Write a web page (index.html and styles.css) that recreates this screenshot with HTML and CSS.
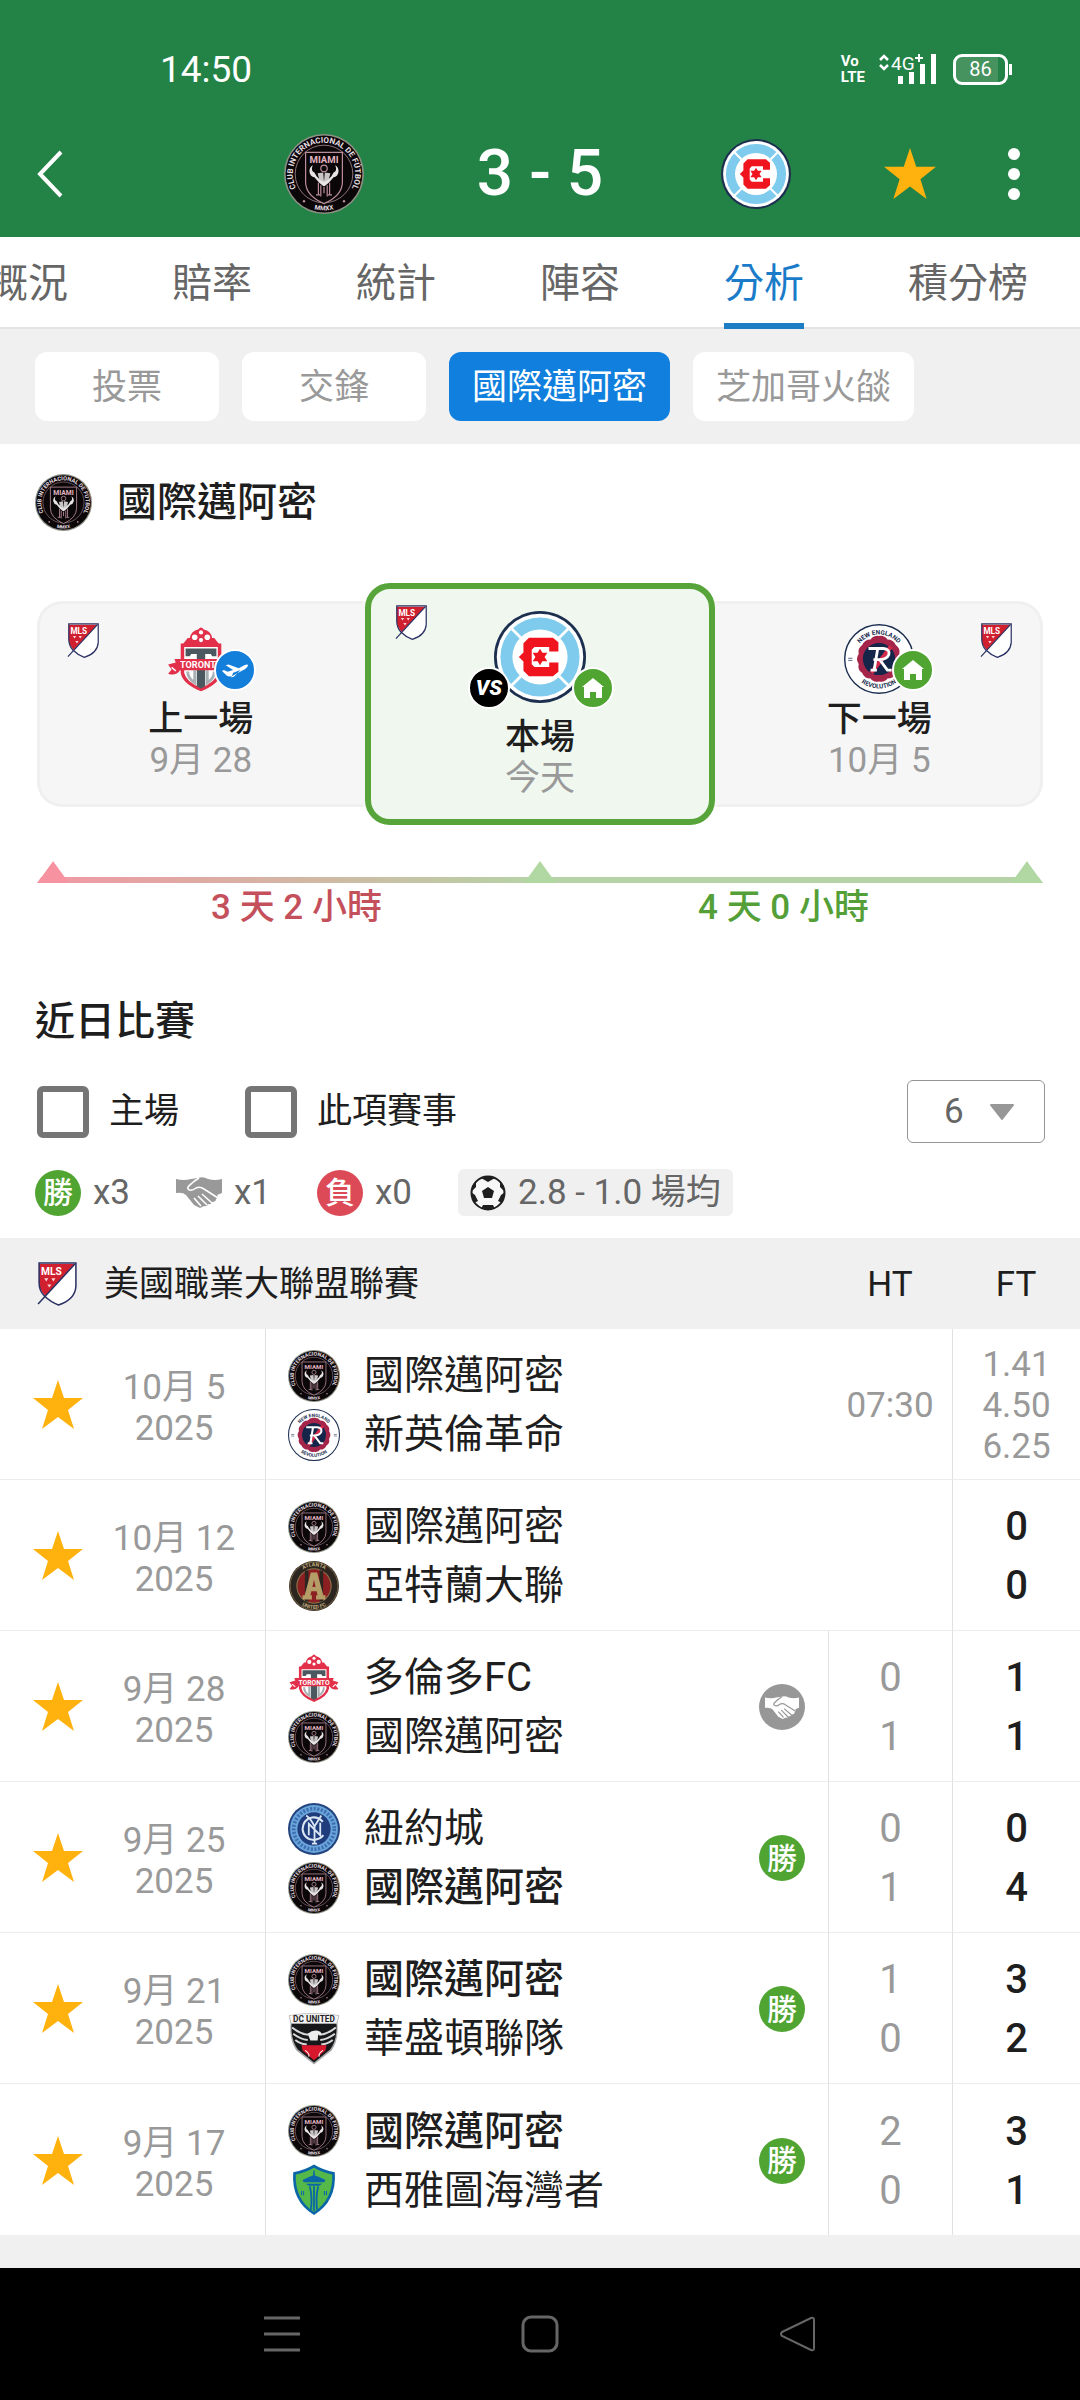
FILE: index.html
```html
<!DOCTYPE html>
<html lang="zh-Hant">
<head>
<meta charset="UTF-8">
<meta name="viewport" content="width=device-width">
<title>國際邁阿密 3 - 5 芝加哥火燄</title>
<link rel="stylesheet" href="styles.css">
</head>
<body>
	<!-- logos and icons -->
	<svg class="sprite" aria-hidden="true">
		<symbol id="miami" viewBox="0 0 100 100">
			<circle cx="50" cy="50" r="50" fill="#8d9084"/>
			<circle cx="50" cy="50" r="48" fill="#0b0709"/>
			<path id="miami_arc" d="M24 79 A39 39 0 1 1 76 79" fill="none"/>
			<path id="miami_bas" d="M30 91 A46 46 0 0 0 70 91" fill="none"/>
			<text class="logo_texte" font-size="10" fill="#e6dfe1"><textPath href="#miami_arc" startOffset="50%" text-anchor="middle">CLUB INTERNACIONAL DE FÚTBOL</textPath></text>
			<text class="logo_texte" font-size="8" fill="#e6dfe1"><textPath href="#miami_bas" startOffset="50%" text-anchor="middle">MMXX</textPath></text>
			<circle cx="50" cy="50" r="36" fill="none" stroke="#a88a92" stroke-width="1"/>
			<path d="M27 23 H73 V60 Q73 77 50 87 Q27 77 27 60 Z" fill="#0b0709" stroke="#b98d99" stroke-width="1.5"/>
			<text class="logo_texte" x="50" y="36" font-size="12" fill="#e2b3c0" text-anchor="middle">MIAMI</text>
			<circle cx="50" cy="43" r="4" fill="none" stroke="#b98d99" stroke-width="1.5"/>
			<path d="M36 39 Q33 46 38 48 L41 53 Q45 58 50 58 Q55 58 59 53 L62 48 Q67 46 64 39 Q69 42 68 48 Q67 53 62 54 L56 61 L51 65 H49 L44 61 L38 54 Q33 53 32 48 Q31 42 36 39 Z" fill="#e8e4e5"/>
			<path d="M42 49 L49 48 L50 60 L44 57 Z M58 49 L51 48 L50 60 L56 57 Z" fill="#c9c5c6"/>
			<path d="M43 61 V76 M46 64 V78 M57 61 V76 M54 64 V78 M40 76 H45 M55 76 H60 M50 66 V74" fill="none" stroke="#b98d99" stroke-width="1.5"/>
			<circle cx="25" cy="84" r="1.5" fill="#b98d99"/>
			<circle cx="75" cy="84" r="1.5" fill="#b98d99"/>
		</symbol>
		<symbol id="chicago" viewBox="0 0 100 100">
			<circle cx="50" cy="50" r="50" fill="#1c2f4f"/>
			<circle cx="50" cy="50" r="47" fill="#fff"/>
			<circle cx="50" cy="50" r="43" fill="#7ecbee"/>
			<path d="M18 18 L82 82 M82 18 L18 82" stroke="#fff" stroke-width="3"/>
			<circle cx="50" cy="50" r="30" fill="#fff"/>
			<path d="M70 44 V34 L64 29 H38 L32 35 V45 L27 50 L32 55 V65 L38 71 H64 L70 66 V56 H60 V61 H44 L41 58 V42 L44 39 H60 V44 Z" fill="#f0141e"/>
			<path d="M50 41 L52.600 45.500 H58 L55 50 L58 54.500 H52.600 L50 59 L47.400 54.500 H42 L45 50 L42 45.500 H47.400 Z" fill="#f0141e"/>
		</symbol>
		<symbol id="mls" viewBox="0 0 40 44">
			<path d="M2 2 H38 V24 Q37 37 22 42 Q14 40 8 33 Q2 28 2 20 Z" fill="#fff"/>
			<path d="M2 2 H37 L8 33 Q2 27 2 20 Z" fill="#d0202f"/>
			<path d="M2 1 H38 V24 Q37 37 21 42 Q13 39 7 33 Q2 28 2 20 Z" fill="none" stroke="#2b3263" stroke-width="1.5"/>
			<path d="M37 2 L1 41" stroke="#2b3263" stroke-width="1.5"/>
			<text class="logo_texte" x="4" y="13" font-size="10" fill="#fff">MLS</text>
			<path d="M7 16 l2 3 2-3 Z M14 16 l2 3 2-3 Z M10 22 l2 3 2-3 Z" fill="#fbd5d8"/>
		</symbol>
		<symbol id="toronto" viewBox="0 0 100 100">
			<path d="M24 29 L31 20 H34 Q36 10 46 8 Q50 2 54 8 Q64 10 66 20 H69 L76 29 Z" fill="#e3304a"/>
			<g fill="#fff"><circle cx="50" cy="12" r="3"/><circle cx="41" cy="19" r="4"/><circle cx="59" cy="19" r="4"/><circle cx="50" cy="23" r="3"/></g>
			<path d="M21 28 H79 V70 Q76 86 50 96 Q24 86 21 70 Z" fill="#e3304a"/>
			<path d="M26 33 H74 V70 Q71 83 50 91 Q29 83 26 70 Z" fill="#fff"/>
			<path d="M28 35 H72 V46 H66 L64 43 H56 V89 L50 92 L44 89 V43 H36 L34 46 H28 Z" fill="#4c5860"/>
			<path d="M31 68 Q31 78 41 84 V66 M69 68 Q69 78 59 84 V66" fill="none" stroke="#a9b0b4" stroke-width="4"/>
			<path d="M12 50 H88 L86 55 L97 58 L92 65 L97 71 Q86 75 80 66 H20 Q14 75 3 71 L8 65 L3 58 L14 55 Z" fill="#e3304a"/>
			<path d="M8 62 L14 67 M92 62 L86 67" stroke="#fff" stroke-width="2"/>
			<text class="logo_texte" x="50" y="63" font-size="13" fill="#fff" text-anchor="middle">TORONTO</text>
		</symbol>
		<symbol id="revolution" viewBox="0 0 100 100">
			<circle cx="50" cy="50" r="49" fill="#fff" stroke="#1b2d4f" stroke-width="2"/>
			<path id="rev_arc" d="M15 50 A35 35 0 0 1 85 50" fill="none"/>
			<path id="rev_bas" d="M8 50 A42 42 0 0 0 92 50" fill="none"/>
			<text class="logo_texte" font-size="9" fill="#1b2d4f"><textPath href="#rev_arc" startOffset="50%" text-anchor="middle">NEW ENGLAND</textPath></text>
			<text class="logo_texte" font-size="9" fill="#1b2d4f"><textPath href="#rev_bas" startOffset="50%" text-anchor="middle">REVOLUTION</textPath></text>
			<path d="M6 49 H12 M6 52 H12 M88 49 H94 M88 52 H94" stroke="#1b2d4f" stroke-width="1"/>
			<path d="M50 17 Q58 16 62 22 Q71 22 74 30 Q81 35 79 43 Q84 50 79 57 Q81 66 74 70 Q71 78 62 78 Q58 84 50 82 Q42 84 38 78 Q29 78 26 70 Q19 66 21 57 Q16 50 21 43 Q19 35 26 30 Q29 22 38 22 Q42 16 50 17 Z" fill="#a5244a"/>
			<circle cx="50" cy="50" r="23" fill="#15254a"/>
			<path d="M39 70 L67 32" stroke="#d22a4b" stroke-width="6"/>
			<path d="M35 35 H56 Q66 36 64 44 Q61 51 50 51 H42 M48 36 L43 66 M38 66 H47 M51 51 L62 66 H68" fill="none" stroke="#fff" stroke-width="4"/>
		</symbol>
		<symbol id="atlanta" viewBox="0 0 100 100">
			<circle cx="50" cy="50" r="48" fill="#2c2520"/>
			<circle cx="50" cy="50" r="46" fill="none" stroke="#8b774c" stroke-width="1.5"/>
			<circle cx="50" cy="50" r="34" fill="#8b774c"/>
			<circle cx="50" cy="50" r="32" fill="#8c1f22"/>
			<path d="M36 20 V80 M64 20 V80" stroke="#2c2520" stroke-width="7"/>
			<path d="M44 24 H56 L68 68 H72 V76 H54 V68 H57 L55 60 H45 L43 68 H46 V76 H28 V68 H32 Z M50 38 L47 52 H53 Z" fill="#b59d68" fill-rule="evenodd"/>
			<path id="atl_arc" d="M12 50 A38 38 0 0 1 88 50" fill="none"/>
			<path id="atl_bas" d="M6 50 A44 44 0 0 0 94 50" fill="none"/>
			<text class="logo_texte" font-size="10" fill="#c0ab7c"><textPath href="#atl_arc" startOffset="50%" text-anchor="middle">ATLANTA</textPath></text>
			<text class="logo_texte" font-size="10" fill="#c0ab7c"><textPath href="#atl_bas" startOffset="50%" text-anchor="middle">UNITED FC</textPath></text>
		</symbol>
		<symbol id="newyork" viewBox="0 0 100 100">
			<circle cx="50" cy="50" r="50" fill="#24457f"/>
			<circle cx="50" cy="50" r="46" fill="#6aa5dc"/>
			<circle cx="50" cy="50" r="39" fill="none" stroke="#3e6fb0" stroke-width="7" stroke-dasharray="4 3"/>
			<circle cx="50" cy="50" r="32" fill="#1f3c7c"/>
			<path d="M67 36 Q58 26 46 28 Q29 32 28 50 Q30 70 50 71 Q62 70 68 62" fill="none" stroke="#dbe6f3" stroke-width="4"/>
			<path d="M40 62 V40 L62 62 V38 M35 24 Q44 30 51 45 L64 24 M51 45 V78 M46 78 H56" fill="none" stroke="#dbe6f3" stroke-width="3.5"/>
		</symbol>
		<symbol id="washington" viewBox="0 0 100 100">
			<path d="M2 5 Q26 0 50 1 Q74 0 98 5 L95 20 Q98 52 84 72 L50 99 L16 72 Q2 52 5 20 Z" fill="#a9a9a9"/>
			<path d="M7 20 H93 Q95 52 81 70 L50 95 L19 70 Q5 52 7 20 Z" fill="#17181a"/>
			<path d="M2 5 Q26 0 50 1 Q74 0 98 5 L94 20 H6 Z" fill="#f4f4f4" stroke="#a9a9a9" stroke-width="1"/>
			<text class="logo_texte" x="50" y="17" font-size="16" fill="#222" text-anchor="middle">DC UNITED</text>
			<path d="M8 28 Q22 40 40 42 M10 40 Q24 51 38 52 M14 52 Q26 61 36 60 M92 28 Q78 40 60 42 M90 40 Q76 51 62 52 M86 52 Q74 61 64 60" fill="none" stroke="#d8d8d8" stroke-width="4"/>
			<path d="M38 40 Q50 30 62 36 L66 42 L58 42 L57 53 H43 Z" fill="#ededed"/>
			<path d="M26 62 H74 L72 72 L50 91 L28 72 Z" fill="#d8182c"/>
			<path d="M33 72 Q42 78 40 84 M67 72 Q58 78 60 84" stroke="#fff" stroke-width="2" fill="none"/>
		</symbol>
		<symbol id="seattle" viewBox="0 0 100 100">
			<path d="M50 1 Q68 12 90 16 Q94 72 50 98 Q6 72 10 16 Q32 12 50 1 Z" fill="#0b66a8"/>
			<path d="M50 7 Q68 17 85 20 Q87 68 50 92 Q13 68 15 20 Q32 17 50 7 Z" fill="#55b949"/>
			<path d="M49 12 H51 L52 22 L60 25 L72 31 L70 35 H30 L28 31 L40 25 L48 22 Z M34 38 H66 L60 42 H40 Z" fill="#0b66a8"/>
			<path d="M42 43 Q47 64 44 88 M58 43 Q53 64 56 88 M50 43 V90" fill="none" stroke="#0b66a8" stroke-width="3.500"/>
			<path d="M26 52 V60 M30 52 V60 M70 52 V60 M74 52 V60" stroke="#0b66a8" stroke-width="2"/>
		</symbol>
		<symbol id="star" viewBox="0 0 50 50">
			<path d="M25 0 L31 18 H50 L35 30 L41 49 L25 37 L9 49 L15 30 L0 18 H19 Z" fill="#ffb10d"/>
		</symbol>
		<symbol id="home" viewBox="0 0 24 24">
			<path d="M12 2 L23 11 H21 V22 H15 V16 H9 V22 H3 V11 H1 Z" fill="#fff"/>
		</symbol>
		<symbol id="plane" viewBox="0 0 28 16">
			<path d="M0 9 L2 8 L6 10 L12 8 L4 3 L7 2 L18 6 L24 3 Q28 1 28 3 Q28 5 25 7 L12 14 Q8 16 5 14 Z M12 11 L10 16 L13 15 L20 8 Z" fill="#fff"/>
		</symbol>
		<symbol id="handshake" viewBox="0 0 46 31">
			<path d="M0 2 Q8 4 15 2 L22 1 Q27 -1 32 2 Q39 4 46 2 V16 L41 18 Q43 21 40 22 Q40 25 36 25 Q35 28 32 27 Q31 30 28 29 L24 31 L18 28 L10 18 Q7 15 0 16 Z" fill="currentColor"/>
			<path class="handshake_trait" d="M23 1 Q18 4 15 7 Q11 10 12 12 Q15 15 20 11 Q24 9 28 12 L42 21 M26 17 L36 26 M22 19 L31 28 M18 21 L25 29" fill="none" stroke-width="1.600"/>
		</symbol>
		<symbol id="ball" viewBox="0 0 36 36">
			<circle cx="18" cy="18" r="16.500" fill="#f7f7f7" stroke="#1e1e1e" stroke-width="2"/>
			<path d="M18 12 L24 16 L22 23 H14 L12 16 Z M11 3 L18 7 L25 3 L18 1 Z M1 17 L6 12 L6 6 L2 11 Z M35 17 L30 12 L30 6 L34 11 Z M1 17 L5 20 L8 26 L4 28 Z M35 17 L31 20 L28 26 L32 28 Z M13 30 H23 L25 34 H11 Z" fill="#1e1e1e"/>
		</symbol>
	</svg>

	<header>
		<div class="status">
			<time>14:50</time>
			<div class="status_icons">
				<div class="volte">Vo<br>LTE</div>
				<svg width="58" height="32" viewBox="0 0 58 32">
					<path d="M1 7 L5 3 L9 7 M1 12 L5 16 L9 12" fill="none" stroke="#fff" stroke-width="2.500"/>
					<text class="reseau" x="12" y="17" font-size="19">4G</text>
					<path d="M36 5 H44 M40 1 V9" stroke="#fff" stroke-width="2"/>
					<path d="M19 23 h5 v8 h-5 Z M30 19 h5 v12 h-5 Z M41 11 h5 v20 h-5 Z M52 1 h5 v30 h-5 Z" fill="#fff"/>
				</svg>
				<div class="battery">86</div>
			</div>
		</div>
		<div class="appbar">
			<button class="back" aria-label="返回"><svg width="28" height="48" viewBox="0 0 28 48"><path d="M25 2 L4 24 L25 46" fill="none" stroke="#fff" stroke-width="4"/></svg></button>
			<svg class="logo80"><use href="#miami"/></svg>
			<h1>3 - 5</h1>
			<svg class="logo70"><use href="#chicago"/></svg>
			<div class="actions">
				<button aria-label="收藏"><svg class="star_big"><use href="#star"/></svg></button>
				<button aria-label="更多"><svg width="14" height="54" viewBox="0 0 14 54"><g fill="#fff"><circle cx="7" cy="7" r="6"/><circle cx="7" cy="27" r="6"/><circle cx="7" cy="47" r="6"/></g></svg></button>
			</div>
		</div>
	</header>

	<nav class="tabs">
		<a href="#">概況</a>
		<a href="#">賠率</a>
		<a href="#">統計</a>
		<a href="#">陣容</a>
		<a href="#" class="active">分析</a>
		<a href="#">積分榜</a>
	</nav>

	<div class="chips">
		<button>投票</button>
		<button>交鋒</button>
		<button class="active">國際邁阿密</button>
		<button>芝加哥火燄</button>
	</div>

	<main>
		<h2 class="team_title"><svg><use href="#miami"/></svg>國際邁阿密</h2>

		<section class="cards">
			<div class="card prev">
				<svg class="ligue"><use href="#mls"/></svg>
				<div class="crest">
					<svg class="logo70"><use href="#toronto"/></svg>
					<span class="pin away"><svg width="26" height="16"><use href="#plane"/></svg></span>
				</div>
				<b>上一場</b>
				<span>9月 28</span>
			</div>
			<div class="card current">
				<svg class="ligue"><use href="#mls"/></svg>
				<div class="crest">
					<span class="pin versus">VS</span>
					<svg class="logo92"><use href="#chicago"/></svg>
					<span class="pin"><svg width="24" height="24"><use href="#home"/></svg></span>
				</div>
				<b>本場</b>
				<span>今天</span>
			</div>
			<div class="card next">
				<svg class="ligue"><use href="#mls"/></svg>
				<div class="crest">
					<svg class="logo70"><use href="#revolution"/></svg>
					<span class="pin"><svg width="24" height="24"><use href="#home"/></svg></span>
				</div>
				<b>下一場</b>
				<span>10月 5</span>
			</div>
		</section>

		<div class="timeline"><i class="red"></i><i></i><i></i></div>
		<div class="rest">
			<span class="red">3 天 2 小時</span>
			<span>4 天 0 小時</span>
		</div>

		<h2 class="recent">近日比賽</h2>

		<div class="filters">
			<label><input type="checkbox">主場</label>
			<label><input type="checkbox">此項賽事</label>
			<div class="count">
				<select aria-label="場數"><option>6</option></select>
				<svg width="26" height="17" viewBox="0 0 26 17"><path d="M2 1 H24 L13 15 Z" fill="#979797" stroke="#979797" stroke-width="2" stroke-linejoin="round"/></svg>
			</div>
		</div>

		<div class="stats">
			<div class="stat"><span class="rond">勝</span>x3</div>
			<div class="stat"><svg class="draw"><use href="#handshake"/></svg>x1</div>
			<div class="stat"><span class="rond lost">負</span>x0</div>
			<div class="average"><svg><use href="#ball"/></svg>2.8 - 1.0 場均</div>
		</div>

		<table>
			<colgroup><col class="c_date"><col><col class="c_ht"><col class="c_ft"></colgroup>
			<thead>
				<tr>
					<th colspan="2"><div class="league"><svg><use href="#mls"/></svg>美國職業大聯盟聯賽</div></th>
					<th>HT</th>
					<th>FT</th>
				</tr>
			</thead>
			<tbody>
				<tr>
					<td><div class="date"><button aria-label="收藏"><svg><use href="#star"/></svg></button><span>10月 5<br>2025</span></div></td>
					<td><div class="teams">
						<div><svg><use href="#miami"/></svg>國際邁阿密</div>
						<div><svg><use href="#revolution"/></svg>新英倫革命</div>
					</div></td>
					<td class="hour">07:30</td>
					<td class="odds">1.41<br>4.50<br>6.25</td>
				</tr>
				<tr>
					<td><div class="date"><button aria-label="收藏"><svg><use href="#star"/></svg></button><span>10月 12<br>2025</span></div></td>
					<td><div class="teams">
						<div><svg><use href="#miami"/></svg>國際邁阿密</div>
						<div><svg><use href="#atlanta"/></svg>亞特蘭大聯</div>
					</div></td>
					<td class="hour"></td>
					<td class="ft">0<br>0</td>
				</tr>
				<tr>
					<td><div class="date"><button aria-label="收藏"><svg><use href="#star"/></svg></button><span>9月 28<br>2025</span></div></td>
					<td><div class="teams">
						<div><svg><use href="#toronto"/></svg>多倫多FC</div>
						<div><svg><use href="#miami"/></svg>國際邁阿密</div>
						<span class="rond tie"><svg><use href="#handshake"/></svg></span>
					</div></td>
					<td class="ht">0<br>1</td>
					<td class="ft">1<br>1</td>
				</tr>
				<tr>
					<td><div class="date"><button aria-label="收藏"><svg><use href="#star"/></svg></button><span>9月 25<br>2025</span></div></td>
					<td><div class="teams">
						<div><svg><use href="#newyork"/></svg>紐約城</div>
						<div class="winner"><svg><use href="#miami"/></svg>國際邁阿密</div>
						<span class="rond">勝</span>
					</div></td>
					<td class="ht">0<br>1</td>
					<td class="ft">0<br>4</td>
				</tr>
				<tr>
					<td><div class="date"><button aria-label="收藏"><svg><use href="#star"/></svg></button><span>9月 21<br>2025</span></div></td>
					<td><div class="teams">
						<div class="winner"><svg><use href="#miami"/></svg>國際邁阿密</div>
						<div><svg><use href="#washington"/></svg>華盛頓聯隊</div>
						<span class="rond">勝</span>
					</div></td>
					<td class="ht">1<br>0</td>
					<td class="ft">3<br>2</td>
				</tr>
				<tr>
					<td><div class="date"><button aria-label="收藏"><svg><use href="#star"/></svg></button><span>9月 17<br>2025</span></div></td>
					<td><div class="teams">
						<div class="winner"><svg><use href="#miami"/></svg>國際邁阿密</div>
						<div><svg><use href="#seattle"/></svg>西雅圖海灣者</div>
						<span class="rond">勝</span>
					</div></td>
					<td class="ht">2<br>0</td>
					<td class="ft">3<br>1</td>
				</tr>
			</tbody>
		</table>
	</main>

	<footer>
		<button aria-label="最近"><svg width="38" height="38" viewBox="0 0 38 38"><path d="M1 3 H37 M1 19 H37 M1 35 H37" stroke="#666" stroke-width="3"/></svg></button>
		<button aria-label="主頁"><svg width="38" height="38" viewBox="0 0 38 38"><rect x="2" y="2" width="34" height="34" rx="8" fill="none" stroke="#666" stroke-width="3"/></svg></button>
		<button aria-label="返回"><svg width="38" height="38" viewBox="0 0 38 38"><path d="M3 17 L32 3 Q35 2 35 5 V33 Q35 36 32 35 L3 21 Q1 19 3 17 Z" fill="none" stroke="#666" stroke-width="2"/></svg></button>
	</footer>
</body>
</html>
```
FILE: styles.css
```css
*
{
	box-sizing : border-box;
}

body
{
	margin : 0;
	display : flex;
	flex-direction : column;
	min-height : 100vh;
	font : 35px/41px Roboto, "Noto Sans CJK TC", sans-serif;
	color : #1e1e1e;
	background : #f0f0f0;
	overflow-x : hidden;
}

h1, h2
{
	margin : 0;
	font-weight : 500;
}

svg
{
	display : block;
	flex : none;
}

button
{
	margin : 0;
	padding : 0;
	border : 0;
	background : none;
	font : inherit;
	color : inherit;
}

.sprite
{
	display : none;
}

.logo_texte
{
	font-family : Roboto, sans-serif;
	font-weight : 700;
}

.logo92
{
	width : 92px;
	height : 92px;
}

.logo80
{
	width : 80px;
	height : 80px;
}

.logo70
{
	width : 70px;
	height : 70px;
}

/* header */

header
{
	background : #238347;
	color : #fff;
}

.status
{
	display : flex;
	align-items : center;
	justify-content : space-between;
	height : 110px;
	padding : 28px 68px 0 160px;
}

.status time
{
	font-size : 37px;
}

.status_icons
{
	display : flex;
	align-items : center;
}

.volte
{
	margin-right : 14px;
	font-size : 15px;
	font-weight : 700;
	line-height : 16px;
}

.reseau
{
	font-family : Roboto, sans-serif;
	fill : #fff;
}

.battery
{
	position : relative;
	width : 55px;
	height : 31px;
	margin : 0 4px 0 16px;
	border : 3px solid #fff;
	border-radius : 9px;
	background : linear-gradient(to right, #46935f 86%, #238347 86%);
	font-size : 20px;
	line-height : 25px;
	text-align : center;
}

.battery::after
{
	content : "";
	position : absolute;
	right : -7px;
	top : 7px;
	width : 3px;
	height : 11px;
	background : #fff;
}

.appbar
{
	display : grid;
	grid-template-columns : repeat(5, 1fr);
	align-items : center;
	justify-items : center;
	height : 127px;
}

.appbar h1
{
	font-size : 64px;
	line-height : 72px;
	white-space : nowrap;
}

.back
{
	justify-self : start;
	padding-left : 36px;
}

.actions
{
	display : flex;
	align-items : center;
	justify-content : space-between;
	width : 100%;
	padding : 0 59px 0 20px;
}

.star_big
{
	width : 52px;
	height : 52px;
}

/* tabs */

.tabs
{
	display : flex;
	justify-content : flex-end;
	height : 92px;
	background : #fff;
	border-bottom : 2px solid #e4e4e4;
}

.tabs a
{
	flex : none;
	margin : 0 52px;
	height : 92px;
	font-size : 40px;
	line-height : 94px;
	color : #666;
	text-decoration : none;
	white-space : nowrap;
}

.tabs a.active
{
	color : #1a7bc9;
	border-bottom : 6px solid #1b7dc3;
}

.chips
{
	display : flex;
	gap : 23px;
	padding : 23px 35px;
}

.chips button
{
	min-width : 184px;
	height : 69px;
	padding : 2px 23px 0;
	border-radius : 12px;
	background : #fff;
	color : #999;
	white-space : nowrap;
}

.chips button.active
{
	background : #107fdd;
	color : #fff;
}

/* analysis */

main
{
	background : #fff;
	padding-top : 29px;
}

.team_title
{
	display : flex;
	align-items : center;
	gap : 25px;
	padding : 0 35px;
	font-size : 40px;
	line-height : 59px;
}

.team_title svg
{
	width : 57px;
	height : 57px;
}

.cards
{
	display : grid;
	grid-template-columns : 14fr 15fr 14fr;
	align-items : center;
	margin : 51px 37px 36px;
}

.card
{
	position : relative;
	display : flex;
	flex-direction : column;
	align-items : center;
	height : 206px;
	padding-top : 20px;
	border : 3px solid #f0f0f0;
	background : #f6f6f6;
}

.card b
{
	margin-top : 5px;
	font-weight : 500;
}

.card > span
{
	color : #999;
}

.prev
{
	border-right-color : #f6f6f6;
	border-radius : 25px 0 0 25px;
}

.next
{
	border-left-color : #f6f6f6;
	border-radius : 0 25px 25px 0;
}

.current
{
	height : 242px;
	padding-top : 22px;
	border : 6px solid #56a43a;
	border-radius : 25px;
	background : #eff7ef;
}

.current b
{
	margin-top : 14px;
}

.ligue
{
	position : absolute;
	left : 27px;
	top : 19px;
	width : 33px;
	height : 36px;
}

.current .ligue
{
	left : 24px;
	top : 16px;
}

.next .ligue
{
	left : auto;
	right : 27px;
}

.crest
{
	position : relative;
}

.pin
{
	position : absolute;
	right : -20px;
	bottom : 3px;
	display : flex;
	align-items : center;
	justify-content : center;
	width : 42px;
	height : 42px;
	border : 2px solid #fff;
	border-radius : 50%;
	background : #50a532;
}

.current .pin
{
	right : -28px;
	bottom : -6px;
}

.pin.away
{
	background : #147fdb;
}

.current .pin.versus
{
	right : auto;
	left : -26px;
	background : #000;
	color : #fff;
	font-size : 21px;
	font-style : italic;
	font-weight : 900;
}

.timeline
{
	display : flex;
	justify-content : space-between;
	height : 22px;
	margin : 0 37px;
	background : linear-gradient(to right, #f297a3, #b5d3a6 50%) no-repeat bottom / 100% 6px;
	clip-path : polygon(0 100%, 16px 0, calc(100% - 16px) 0, 100% 100%);
}

.timeline i
{
	width : 32px;
	background : #b1d8a2;
	clip-path : polygon(50% 0, 100% 100%, 0 100%);
}

.timeline i.red
{
	background : #f793a1;
}

.rest
{
	display : grid;
	grid-template-columns : 1fr 1fr;
	margin : 4px 53px 70px;
	text-align : center;
	font-weight : 500;
	color : #549f38;
}

.rest .red
{
	color : #c4505c;
}

.recent
{
	padding : 0 35px;
	font-size : 40px;
	line-height : 48px;
}

.filters
{
	display : flex;
	align-items : center;
	gap : 66px;
	margin : 34px 35px 26px 37px;
}

.filters label
{
	display : flex;
	align-items : center;
	gap : 20px;
}

.filters input
{
	appearance : none;
	width : 52px;
	height : 52px;
	margin : 0;
	border : 6px solid #757575;
	border-radius : 6px;
	background : #fff;
}

.count
{
	position : relative;
	margin-left : auto;
}

.count select
{
	appearance : none;
	display : block;
	width : 138px;
	height : 63px;
	padding : 0 36px;
	border : 1px solid #949494;
	border-radius : 6px;
	background : #fff;
	font : inherit;
	color : #666;
}

.count svg
{
	position : absolute;
	right : 30px;
	top : 24px;
	pointer-events : none;
}

.stats
{
	display : flex;
	align-items : center;
	padding : 0 35px 22px;
	color : #666;
}

.stat
{
	display : flex;
	align-items : center;
	gap : 12px;
	width : 141px;
}

.rond
{
	--trait : #979797;
	display : flex;
	align-items : center;
	justify-content : center;
	flex : none;
	width : 46px;
	height : 46px;
	border-radius : 50%;
	background : #50a532;
	color : #fff;
	font-size : 30px;
	font-weight : 500;
}

.rond.lost
{
	background : #dc4a58;
}

.rond.tie
{
	background : #979797;
}

.teams .rond.tie svg
{
	width : 34px;
	height : 23px;
}

.draw
{
	width : 46px;
	height : 31px;
	color : #999;
}

.handshake_trait
{
	stroke : var(--trait, #fff);
}

.average
{
	display : flex;
	align-items : center;
	gap : 12px;
	height : 47px;
	padding : 0 12px;
	border-radius : 6px;
	background : #f0f0f0;
	white-space : nowrap;
}

.average svg
{
	width : 36px;
	height : 36px;
}

/* matches */

table
{
	width : 100%;
	table-layout : fixed;
	border-collapse : separate;
	border-spacing : 0;
}

.c_date
{
	width : 265px;
}

.c_ht
{
	width : 124px;
}

.c_ft
{
	width : 128px;
}

th
{
	height : 91px;
	padding : 2px 0 0;
	background : #f0f0f0;
	font-weight : 400;
}

td
{
	height : 151px;
	padding : 2px 0 0;
	border-bottom : 1px solid #ececec;
	text-align : center;
}

td + td
{
	border-left : 1px solid #e0e0e0;
}

tr:last-child td
{
	border-bottom : 0;
}

.league
{
	display : flex;
	align-items : center;
	gap : 26px;
	padding-left : 37px;
}

.league svg
{
	width : 41px;
	height : 45px;
}

.date
{
	display : flex;
	align-items : center;
	padding-left : 33px;
	color : #999;
}

.date svg
{
	width : 50px;
	height : 50px;
}

.date span
{
	flex : 1;
	padding-top : 6px;
	white-space : nowrap;
}

.teams
{
	position : relative;
	padding-left : 22px;
	font-size : 40px;
	line-height : 59px;
	text-align : left;
}

.teams div
{
	display : flex;
	align-items : center;
	gap : 24px;
	white-space : nowrap;
}

.teams svg
{
	width : 52px;
	height : 52px;
}

.teams .winner
{
	font-weight : 500;
}

.teams .rond
{
	position : absolute;
	right : 23px;
	top : 36px;
}

td.hour
{
	border-left : 0;
	color : #999;
}

.odds
{
	color : #999;
}

.ht, .ft
{
	font-size : 40px;
	line-height : 59px;
	font-weight : 500;
}

.ht
{
	color : #999;
	font-weight : 400;
}

/* system bar */

footer
{
	display : flex;
	align-items : center;
	justify-content : center;
	gap : 220px;
	height : 132px;
	margin-top : auto;
	background : #000;
}
```
